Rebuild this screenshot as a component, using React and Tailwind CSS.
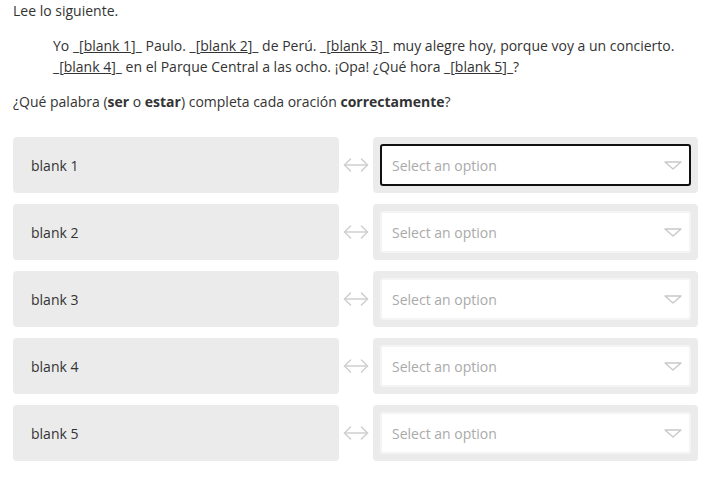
import React from "react";

const B = ({ children }) => (
  <span>
    _<span className="underline">[{children}]</span>_
  </span>
);

function Arrow() {
  return (
    <svg width="26" height="14" viewBox="0 0 26 14" fill="none" stroke="#cfcfcf" strokeWidth="1.5" strokeLinecap="round" strokeLinejoin="round">
      <path d="M1.5 7 H24.5" />
      <path d="M7.5 1 L1.5 7 L7.5 13" />
      <path d="M18.5 1 L24.5 7 L18.5 13" />
    </svg>
  );
}

function Caret() {
  return (
    <svg width="18" height="9" viewBox="0 0 18 9" fill="none" stroke="#c8c8c8" strokeWidth="1.3" strokeLinejoin="round">
      <path d="M1 1 H17 L9 8 Z" />
    </svg>
  );
}

function Row({ label, focused }) {
  return (
    <div className="flex items-stretch h-[56px]">
      <div className="w-[326px] bg-[#ebebeb] rounded-[4px] flex items-center pl-[18px] text-[#333]">
        {label}
      </div>
      <div className="w-[34px] flex items-center justify-center">
        <Arrow />
      </div>
      <div className="w-[325px] bg-[#ebebeb] rounded-[4px] p-[7px] flex">
        <div
          className={
            "flex-1 bg-white rounded-[3px] border-2 flex items-center justify-between pl-[10px] pr-[7px] text-[#aaa] " +
            (focused ? "border-[#111]" : "border-[#f4f4f4]")
          }
        >
          <span>Select an option</span>
          <Caret />
        </div>
      </div>
    </div>
  );
}

export default function App() {
  return (
    <div
      className="w-[710px] h-[496px] bg-white pl-[13px] text-[14px] leading-[21px] text-[#333]"
      style={{ fontFamily: '"Open Sans", sans-serif' }}
    >
      <p className="pt-[0px]">Lee lo siguiente.</p>
      <p className="mt-[14px] ml-[40px] pr-[20px]">
        Yo <B>blank 1</B> Paulo. <B>blank 2</B> de Perú. <B>blank 3</B> muy alegre hoy, porque voy a un concierto.
        <br />
        <B>blank 4</B> en el Parque Central a las ocho. ¡Opa! ¿Qué hora <B>blank 5</B>?
      </p>
      <p className="mt-[14px]">
        ¿Qué palabra (<b>ser</b> o <b>estar</b>) completa cada oración <b>correctamente</b>?
      </p>
      <div className="mt-[25px] flex flex-col gap-[11px]">
        <Row label="blank 1" focused />
        <Row label="blank 2" />
        <Row label="blank 3" />
        <Row label="blank 4" />
        <Row label="blank 5" />
      </div>
    </div>
  );
}
